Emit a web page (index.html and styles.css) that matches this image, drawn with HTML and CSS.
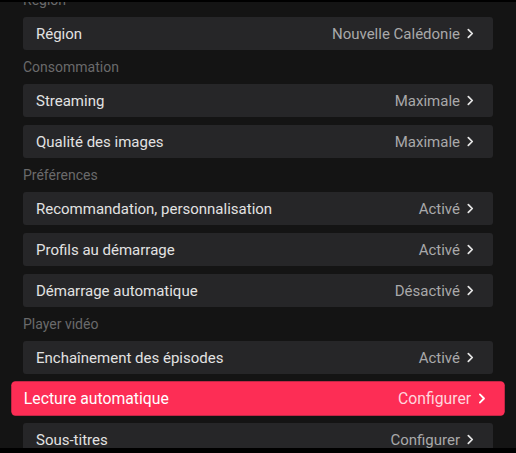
FILE: index.html
```html
<!DOCTYPE html>
<html lang="fr">
<head>
<meta charset="utf-8">
<title>Paramètres</title>
<link rel="stylesheet" href="styles.css">
</head>
<body>
<div class="screen">
  <div class="ghost" aria-hidden="true">
    <div class="ghost-title">LECTURE AUTOMATIQUE</div>
    <div class="ghost-sub">Lecture automatique de la bande-annonce</div>
  </div>
  <div class="list">
    <div class="section">Région</div>
    <div class="row"><span class="label">Région</span><span class="value">Nouvelle Calédonie<svg class="chev" viewBox="0 0 8 12"><polyline points="1.5,1.5 6,6 1.5,10.5"/></svg></span></div>

    <div class="section">Consommation</div>
    <div class="group">
      <div class="row"><span class="label">Streaming</span><span class="value">Maximale<svg class="chev" viewBox="0 0 8 12"><polyline points="1.5,1.5 6,6 1.5,10.5"/></svg></span></div>
      <div class="row"><span class="label">Qualité des images</span><span class="value">Maximale<svg class="chev" viewBox="0 0 8 12"><polyline points="1.5,1.5 6,6 1.5,10.5"/></svg></span></div>
    </div>

    <div class="section">Préférences</div>
    <div class="group">
      <div class="row"><span class="label">Recommandation, personnalisation</span><span class="value">Activé<svg class="chev" viewBox="0 0 8 12"><polyline points="1.5,1.5 6,6 1.5,10.5"/></svg></span></div>
      <div class="row"><span class="label">Profils au démarrage</span><span class="value">Activé<svg class="chev" viewBox="0 0 8 12"><polyline points="1.5,1.5 6,6 1.5,10.5"/></svg></span></div>
      <div class="row"><span class="label">Démarrage automatique</span><span class="value">Désactivé<svg class="chev" viewBox="0 0 8 12"><polyline points="1.5,1.5 6,6 1.5,10.5"/></svg></span></div>
    </div>

    <div class="section">Player vidéo</div>
    <div class="group">
      <div class="row"><span class="label">Enchaînement des épisodes</span><span class="value">Activé<svg class="chev" viewBox="0 0 8 12"><polyline points="1.5,1.5 6,6 1.5,10.5"/></svg></span></div>
      <div class="row focused"><span class="label">Lecture automatique</span><span class="value">Configurer<svg class="chev" viewBox="0 0 8 12"><polyline points="1.5,1.5 6,6 1.5,10.5"/></svg></span></div>
      <div class="row"><span class="label">Sous-titres</span><span class="value">Configurer<svg class="chev" viewBox="0 0 8 12"><polyline points="1.5,1.5 6,6 1.5,10.5"/></svg></span></div>
    </div>
  </div>
</div>
</body>
</html>
```

FILE: styles.css
```css
* { box-sizing: border-box; }

html, body {
  margin: 0;
  padding: 0;
  background: #000;
}

body {
  font-family: Roboto, "Liberation Sans", sans-serif;
}

.screen {
  position: relative;
  width: 516px;
  height: 453px;
  overflow: hidden;
  background: #141414;
  border-top: 2px solid #000;
  border-bottom: 5px solid #000;
}

.ghost {
  position: absolute;
  left: 125px;
  top: 38px;
  pointer-events: none;
  z-index: 2;
}

.ghost-title {
  font-size: 25px;
  font-weight: 700;
  letter-spacing: 0.5px;
  color: rgba(255, 255, 255, 0.018);
}

.ghost-sub {
  margin-top: 46px;
  margin-left: -25px;
  font-size: 14px;
  color: rgba(255, 255, 255, 0.015);
}

.list {
  margin-top: -19px;
  padding: 0 23px;
  display: flex;
  flex-direction: column;
}

.section {
  height: 34px;
  display: flex;
  align-items: center;
  font-size: 14px;
  color: #6a6a6b;
}

.group {
  display: flex;
  flex-direction: column;
  gap: 8px;
}

.row {
  height: 33px;
  display: flex;
  align-items: center;
  justify-content: space-between;
  padding: 0 19px 0 13px;
  background: #262628;
  border-radius: 3px;
  font-size: 15px;
}

.label {
  color: #e2e2e2;
}

.value {
  display: flex;
  align-items: center;
  gap: 7px;
  color: #a9a9aa;
}

.chev {
  width: 7px;
  height: 11px;
  fill: none;
  stroke: #e6e6e6;
  stroke-width: 2;
  stroke-linecap: round;
  stroke-linejoin: round;
}

.focused {
  background: #fd2d55;
  transform: scale(1.05);
  border-radius: 4px;
  padding-left: 12px;
  padding-right: 18px;
}

.focused .label {
  color: #ffffff;
}

.focused .value {
  color: #ffd6de;
}

.focused .chev {
  stroke: #ffffff;
}
```
